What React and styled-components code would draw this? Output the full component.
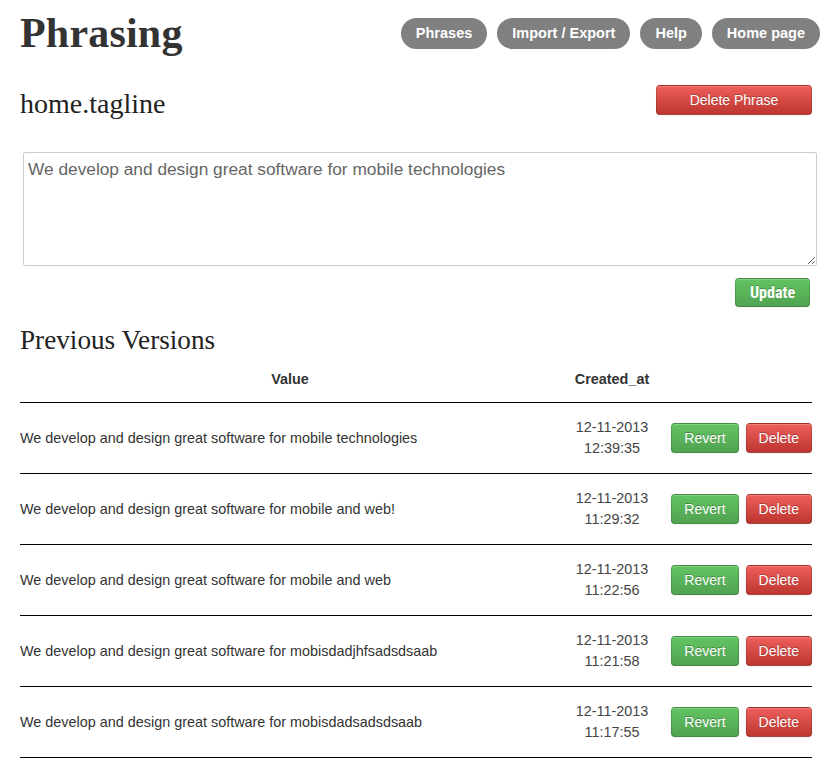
import React from "react";
import styled, { createGlobalStyle } from "styled-components";

const GlobalStyle = createGlobalStyle`
  body {
    margin: 0;
    background: #fff;
    font-family: "Liberation Sans", Arial, sans-serif;
    color: #333;
  }
`;

const Page = styled.div`
  width: 834px;
  padding: 0 22px 0 20px;
  box-sizing: border-box;
`;

const Header = styled.header`
  display: flex;
  justify-content: space-between;
  align-items: center;
  height: 66px;
`;

const Logo = styled.h1`
  margin: 0;
  font-family: "Liberation Serif", "Times New Roman", serif;
  font-weight: bold;
  font-size: 42px;
  color: #333;
  letter-spacing: 0.2px;
`;

const Nav = styled.nav`
  display: flex;
  gap: 10px;
  margin-right: -8px;
`;

const Pill = styled.a`
  display: flex;
  align-items: center;
  height: 31px;
  padding: 0 15px;
  border-radius: 16px;
  background: #808080;
  color: #fff;
  font-weight: bold;
  font-size: 14.5px;
  text-decoration: none;
`;

const TitleRow = styled.div`
  display: flex;
  justify-content: space-between;
  align-items: flex-start;
  margin-top: 19px;
`;

const PhraseKey = styled.h2`
  margin: 4px 0 0;
  line-height: 30px;
  font-family: "Liberation Serif", "Times New Roman", serif;
  font-weight: normal;
  font-size: 28px;
  color: #222;
`;

const Button = styled.button`
  height: ${(p) => p.$h || 30}px;
  padding: 0 ${(p) => p.$px || 12}px;
  border: 1px solid rgba(0, 0, 0, 0.15);
  border-bottom-color: rgba(0, 0, 0, 0.3);
  border-radius: 4px;
  color: #fff;
  font-family: "Liberation Sans", Arial, sans-serif;
  font-size: 14px;
  text-shadow: 0 -1px 0 rgba(0, 0, 0, 0.25);
  box-shadow: inset 0 1px 0 rgba(255, 255, 255, 0.2), 0 1px 2px rgba(0, 0, 0, 0.05);
  background: ${(p) =>
    p.$variant === "success"
      ? "linear-gradient(#62c462, #51a351)"
      : "linear-gradient(#ee5f5b, #bd362f)"};
  cursor: pointer;
  white-space: nowrap;
`;

const DeletePhrase = styled(Button)`
  width: 156px;
`;

const EditArea = styled.textarea`
  display: block;
  width: 794px;
  height: 114px;
  margin: 33px 0 0 3px;
  padding: 6px 4px;
  box-sizing: border-box;
  border: 1px solid #ccc;
  border-radius: 2px;
  font-family: "Liberation Sans", Arial, sans-serif;
  font-size: 17.3px;
  color: #666;
  resize: vertical;
`;

const UpdateRow = styled.div`
  display: flex;
  justify-content: flex-end;
  margin-top: 12px;
  padding-right: 2px;
`;

const UpdateButton = styled(Button)`
  width: 75px;
  height: 29px;
  font-family: "Liberation Sans Narrow", "Roboto Condensed", "Liberation Sans", sans-serif;
  font-weight: bold;
  font-size: 16px;
`;

const SectionTitle = styled.h3`
  margin: 18px 0 0;
  font-family: "Liberation Serif", "Times New Roman", serif;
  font-weight: normal;
  font-size: 27.2px;
  color: #222;
`;

const Table = styled.table`
  width: 792px;
  margin-top: 0;
  border-collapse: collapse;
  font-size: 14.4px;
  color: #333;
`;

const Th = styled.th`
  height: 46px;
  padding: 0;
  font-weight: bold;
  font-size: 14.4px;
  color: #333;
  text-align: center;
  border-bottom: 1px solid #000;
  width: ${(p) => p.$w}px;
`;

const Td = styled.td`
  height: 70px;
  padding: 0;
  border-bottom: 1px solid #000;
  text-align: ${(p) => p.$align || "left"};
  line-height: 21px;
  vertical-align: middle;
`;

const DateText = styled.span`
  display: block;
  color: #444;
  font-size: 14.4px;
`;

const Actions = styled.div`
  display: flex;
  justify-content: flex-end;
  gap: 7px;
`;

const versions = [
  ["We develop and design great software for mobile technologies", "12:39:35"],
  ["We develop and design great software for mobile and web!", "11:29:32"],
  ["We develop and design great software for mobile and web", "11:22:56"],
  ["We develop and design great software for mobisdadjhfsadsdsaab", "11:21:58"],
  ["We develop and design great software for mobisdadsadsdsaab", "11:17:55"],
];

const App = () => (
  <React.Fragment>
    <GlobalStyle />
    <Page>
      <Header>
        <Logo>Phrasing</Logo>
        <Nav>
          <Pill href="#">Phrases</Pill>
          <Pill href="#">Import / Export</Pill>
          <Pill href="#">Help</Pill>
          <Pill href="#">Home page</Pill>
        </Nav>
      </Header>
      <TitleRow>
        <PhraseKey>home.tagline</PhraseKey>
        <DeletePhrase>Delete Phrase</DeletePhrase>
      </TitleRow>
      <EditArea defaultValue="We develop and design great software for mobile technologies" />
      <UpdateRow>
        <UpdateButton $variant="success">Update</UpdateButton>
      </UpdateRow>
      <SectionTitle>Previous Versions</SectionTitle>
      <Table>
        <thead>
          <tr>
            <Th $w={540}>Value</Th>
            <Th $w={104}>Created_at</Th>
            <Th $w={148}></Th>
          </tr>
        </thead>
        <tbody>
          {versions.map(([value, time]) => (
            <tr key={time}>
              <Td>{value}</Td>
              <Td $align="center">
                <DateText>12-11-2013</DateText>
                <DateText>{time}</DateText>
              </Td>
              <Td>
                <Actions>
                  <Button $variant="success" $px={12}>Revert</Button>
                  <Button $variant="danger" $px={12}>Delete</Button>
                </Actions>
              </Td>
            </tr>
          ))}
        </tbody>
      </Table>
    </Page>
  </React.Fragment>
);

export default App;
